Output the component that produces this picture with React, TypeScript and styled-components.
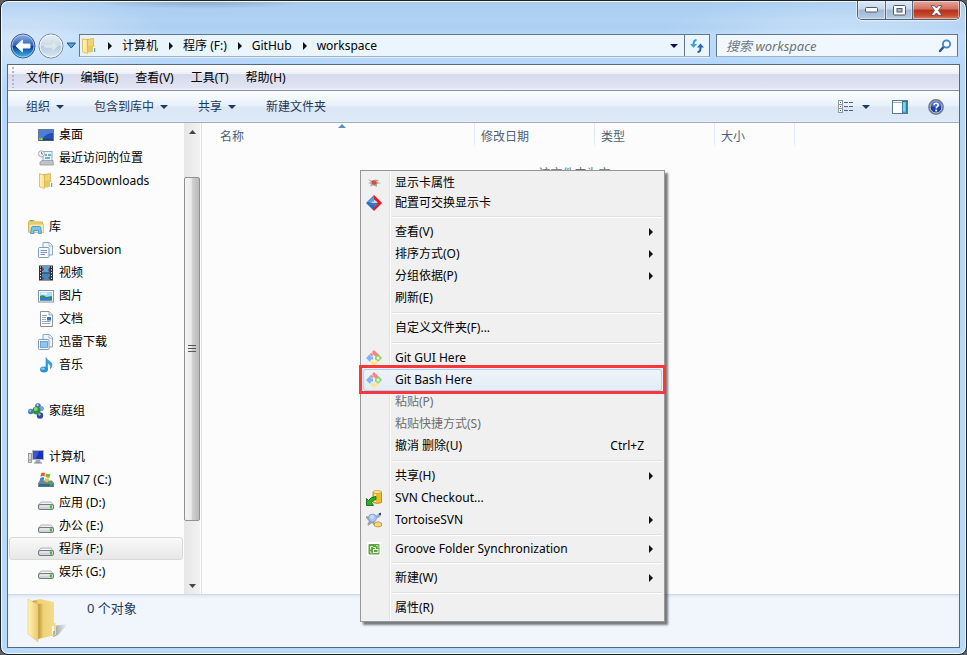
import React from "react";
import styled, { createGlobalStyle, css } from "styled-components";

const GlobalStyle = createGlobalStyle`
  * { box-sizing: border-box; }
  html, body { margin: 0; background: #5d6063; }
  body, button, input {
    font-family: "Noto Sans", "Noto Sans CJK SC", sans-serif;
    font-size: 12px;
    line-height: 16px;
    color: #000;
  }
  button { background: none; border: 0; padding: 0; margin: 0; text-align: left; white-space: nowrap; }
  svg { display: block; flex: none; }
  ul { list-style: none; margin: 0; padding: 0; }
`;

const Window = styled.div`
  position: relative;
  display: flex;
  flex-direction: column;
  height: 100vh;
  overflow: hidden;
  padding: 0 6px 6px;
  border: 1px solid #1d2229;
  border-radius: 8px;
  box-shadow: inset 0 0 0 1px #f2f8fe;
  background:
    radial-gradient(ellipse 150px 50px at 20px 40px, rgba(226, 238, 250, 0.75), transparent),
    radial-gradient(ellipse 110px 8px at 200px 0, rgba(110, 135, 165, 0.55), transparent),
    radial-gradient(ellipse 190px 40px at 850px 34px, rgba(226, 240, 254, 0.55), transparent),
    linear-gradient(#a9cdf1 0, #b0d2f3 20px, #accef0 26px, #b4d7fb 34px, #b6d9fc 100%);
`;

const TitleBar = styled.header`
  display: flex;
  justify-content: flex-end;
  height: 33px;
  flex: none;
`;

const Captions = styled.div`
  display: flex;
  height: 19px;
  border: 1px solid #4c5a6b;
  border-top: 0;
  border-radius: 0 0 5px 5px;
  box-shadow: 0 0 0 1px rgba(255, 255, 255, 0.6);
  overflow: hidden;
`;

const CaptionButton = styled.button<{ $close?: boolean }>`
  display: flex;
  align-items: center;
  justify-content: center;
  width: ${(p) => (p.$close ? 47 : 27)}px;
  box-shadow: inset 0 0 0 1px rgba(255, 255, 255, 0.45);
  background: ${(p) =>
    p.$close
      ? "linear-gradient(#e5a79b 0, #d3705f 45%, #b5301a 50%, #c64a2e 80%, #dd8265)"
      : "linear-gradient(#dde9f6 0, #c4d7eb 45%, #9fb9d4 50%, #b4cde6)"};
  & + & { border-left: 1px solid #5b6b7d; }
`;

const NavRow = styled.nav`
  display: flex;
  align-items: center;
  height: 23px;
  flex: none;
  margin: 0 2px 7px 3px;
`;

const NavButtons = styled.div`
  display: flex;
  align-items: center;
  gap: 2px;
  width: 69px;
  flex: none;
`;

const AddressBar = styled.div`
  display: flex;
  align-items: center;
  flex: 1;
  height: 23px;
  min-width: 0;
  padding-left: 1px;
  border: 1px solid #60778c;
  border-bottom-color: #9db2c6;
  box-shadow: 0 1px 0 rgba(255, 255, 255, 0.6);
  background: linear-gradient(90deg, #e8f2fb, #eaf5fe 20%);
`;

const Crumb = styled.button`
  display: flex;
  align-items: center;
  gap: 10px;
  margin-left: 11px;
`;

const AddressEnd = styled.div`
  display: flex;
  align-items: center;
  margin-left: auto;
  height: 100%;
`;

const AddressAction = styled.button<{ $divided?: boolean }>`
  display: flex;
  align-items: center;
  justify-content: center;
  width: ${(p) => (p.$divided ? 25 : 20)}px;
  height: 100%;
  ${(p) => p.$divided && css`border-left: 1px solid #60778c;`}
`;

const SearchBox = styled.label`
  display: flex;
  align-items: center;
  flex: 0 1 242px;
  height: 23px;
  margin-left: 6px;
  padding: 0 5px 0 9px;
  border: 1px solid #60778c;
  border-bottom-color: #9db2c6;
  background: #f0f7fe;
`;

const SearchInput = styled.input`
  flex: 1;
  min-width: 0;
  border: 0;
  padding: 0;
  outline: 0;
  background: transparent;
  font-size: 13px;
  font-style: italic;
  &::placeholder { color: #6d747b; opacity: 1; }
`;

const Client = styled.div`
  display: flex;
  flex-direction: column;
  flex: 1;
  min-height: 0;
  border: 1px solid #56697c;
  background: #fcfcfc;
`;

const MenuBar = styled.div`
  display: flex;
  align-items: center;
  gap: 17px;
  height: 26px;
  flex: none;
  padding-left: 4px;
  border-bottom: 1px solid #8a90a3;
  background: linear-gradient(#fff 0, #eceff8 9px, #d5daec 9px, #e2e4f4 23px, #f3f5fb);
`;

const Grip = styled.span`
  width: 2px;
  height: 21px;
  margin-right: -5px;
  background: repeating-linear-gradient(#b3b8c9 0 2px, transparent 2px 4px);
`;

const ToolBar = styled.div`
  display: flex;
  align-items: center;
  gap: 30px;
  height: 32px;
  flex: none;
  padding: 0 15px 0 18px;
  border-bottom: 1px solid #a0afc3;
  background: linear-gradient(#fcfefe 0, #e6f0fa 15px, #dce6f4 16px, #dde9f7 30px, #e8f1fa);
`;

const ToolButton = styled.button`
  display: flex;
  align-items: center;
  gap: 6px;
  color: #1e395b;
`;

const ToolEnd = styled.div`
  display: flex;
  align-items: center;
  gap: 20px;
  margin-left: auto;
`;

const ViewGroup = styled.div`
  display: flex;
  align-items: center;
  gap: 9px;
  margin-right: 2px;
`;

const Body = styled.div`
  display: flex;
  flex: 1;
  min-height: 0;
`;

const SideBar = styled.aside`
  width: 176px;
  flex: none;
  overflow: hidden;
`;

const TreeItem = styled.button<{ $top?: boolean; $selected?: boolean }>`
  display: flex;
  align-items: center;
  gap: 5px;
  width: calc(100% - 2px);
  height: 23px;
  margin-left: 1px;
  padding-left: ${(p) => (p.$top ? 18 : 28)}px;
  border: 1px solid transparent;
  border-radius: 3px;
  ${(p) =>
    p.$selected &&
    css`
      border-color: #d9d9d9;
      background: linear-gradient(#f9f9f9, #e7e7e7);
    `}
`;

const TreeGroup = styled.ul`
  & + & { margin-top: 23px; }
`;

const ScrollBar = styled.div`
  display: flex;
  flex-direction: column;
  width: 16px;
  flex: none;
  background: linear-gradient(90deg, #e6e6e6, #f2f2f2);
`;

const ScrollArrow = styled.button`
  display: flex;
  align-items: center;
  justify-content: center;
  height: 17px;
  flex: none;
`;

const ScrollSpace = styled.div<{ $grow: number }>`
  flex: ${(p) => p.$grow} 0 0;
`;

const ScrollThumb = styled.div`
  display: flex;
  flex: 344 0 0;
  align-items: center;
  justify-content: center;
  border: 1px solid #919191;
  border-radius: 2px;
  background: linear-gradient(90deg, #f4f4f4, #ebebeb 45%, #d2d2d2 50%, #b9b9bb);
`;

const Divider = styled.div`
  width: 2px;
  flex: none;
  border-right: 1px solid #d9e4f1;
`;

const Files = styled.main`
  flex: 1;
  min-width: 0;
`;

const Columns = styled.div`
  display: flex;
  height: 24px;
`;

const Column = styled.button<{ $width: number; $first?: boolean }>`
  position: relative;
  width: ${(p) => p.$width}px;
  padding: 4px 0 0 ${(p) => (p.$first ? 18 : 6)}px;
  color: #4c607a;
  border-right: 1px solid;
  border-image: linear-gradient(#dfe9f5, #dfe9f5 80%, transparent) 1;
`;

const SortMark = styled.span`
  position: absolute;
  top: 1px;
  left: 50%;
`;

const EmptyNote = styled.p`
  margin: 19px 0 0;
  text-align: center;
  color: #6d6d6d;
`;

const StatusBar = styled.footer`
  display: flex;
  gap: 19px;
  height: 53px;
  flex: none;
  padding: 2px 0 0 18px;
  border-top: 1px solid #ccd9ea;
  box-shadow: inset 0 2px 2px #dfe8f5;
  background: #f1f5fc;
`;

const StatusText = styled.span`
  padding-top: 3px;
  font-size: 13px;
  color: #1e395b;
`;

const ContextMenu = styled.div`
  position: absolute;
  left: 359px;
  top: 169px;
  width: 305px;
  padding: 2px;
  border: 1px solid #979797;
  box-shadow: 3px 3px 2px rgba(0, 0, 0, 0.5);
  background: linear-gradient(90deg, transparent 28px, #e2e3e3 28px 29px, #fff 29px 30px, transparent 30px), #f0f0f0;
`;

const MenuItem = styled.button<{ $height?: number; $hot?: boolean }>`
  position: relative;
  display: flex;
  align-items: center;
  width: 100%;
  height: ${(p) => p.$height ?? 22}px;
  padding: 0 9px 0 2px;
  ${(p) =>
    p.$hot &&
    css`
      border-radius: 3px;
      box-shadow: inset 0 0 0 1px #aecff7;
      background: linear-gradient(rgba(240, 244, 250, 0.9), rgba(224, 235, 248, 0.9));
      &::after {
        content: "";
        position: absolute;
        inset: -4px -4px -3px;
        border: 3px solid #fb3737;
      }
    `}
  &:disabled { color: #6d6d6d; }
`;

const ItemIcon = styled.span`
  display: flex;
  justify-content: center;
  width: 18px;
  margin-right: 12px;
`;

const Shortcut = styled.span`
  margin-left: auto;
  padding-right: 9px;
`;

const Submenu = styled.span`
  margin-left: auto;
`;

const Separator = styled.hr`
  height: 2px;
  margin: 3px 0 3px 29px;
  border: 0;
  border-top: 1px solid #e0e0e0;
  background: #fff;
`;

const RightArrow = () => (
  <svg width="4" height="8" viewBox="0 0 4 8"><path d="M0 0L4 4L0 8Z" fill="#111" /></svg>
);

const Caret = ({ color = "#1e395b" }: { color?: string }) => (
  <svg width="8" height="4" viewBox="0 0 8 4"><path d="M0 0H8L4 4Z" fill={color} /></svg>
);

const Folder = () => (
  <svg width="16" height="16" viewBox="0 0 16 16">
    <path d="M5 1H10.500V14H5Z" fill="#d6ae45" />
    <path d="M6.500 1.500L12.500 .5V13H6.500Z" fill="#f0d476" stroke="#d3ae4c" strokeWidth=".7" />
    <path d="M1.500 .8L6.500 2V15.500L1.500 13.800Z" fill="#fbe797" stroke="#d9b654" strokeWidth=".8" />
    <path d="M3 2V13.500" stroke="#fff6c8" />
    <path d="M11.500 7.500H13.500V14H10V14.500H7V8Z" fill="#e9c85f" />
    <path d="M12 9H13.800V14H12Z" fill="#fff" />
    <path d="M13 10H14.200V14H13Z" fill="#4ea4e6" />
  </svg>
);

const BigFolder = () => (
  <svg width="42" height="46" viewBox="0 0 42 46">
    <defs>
      <linearGradient id="bf1" x2="1"><stop stopColor="#fff3b8" /><stop offset="1" stopColor="#edcb68" /></linearGradient>
      <linearGradient id="bf2" x2="1"><stop stopColor="#b8953c" /><stop offset=".3" stopColor="#efd176" /><stop offset="1" stopColor="#f6df8e" /></linearGradient>
      <linearGradient id="bf3" x2="1"><stop stopColor="#555" stopOpacity=".6" /><stop offset="1" stopColor="#777" stopOpacity="0" /></linearGradient>
    </defs>
    <path d="M27 29L42 27L32 38L27 40Z" fill="url(#bf3)" />
    <path d="M6 4L14 2L28 5V29L12 38Z" fill="url(#bf2)" />
    <path d="M12 7L28 5V27L30 28V38L12 42Z" fill="url(#bf2)" />
    <path d="M2 2L12 8V45L2 37Z" fill="url(#bf1)" stroke="#e6cd79" strokeWidth=".6" />
    <path d="M26 26H29.500V37L25 38V29Z" fill="#f3da85" />
    <path d="M27 29V37" stroke="#fff" strokeWidth="1.500" />
    <path d="M28 34V37.500" stroke="#4e9bdc" strokeWidth="1.200" />
  </svg>
);

const BackIcon = () => (
  <svg width="26" height="26" viewBox="0 0 26 26">
    <defs>
      <linearGradient id="bk" x2="0" y2="1"><stop stopColor="#93b6e6" /><stop offset=".48" stopColor="#2c62b8" /><stop offset=".52" stopColor="#0c3c98" /><stop offset="1" stopColor="#3ec2f5" /></linearGradient>
    </defs>
    <circle cx="13" cy="13" r="12" fill="url(#bk)" stroke="#455c7b" />
    <circle cx="13" cy="13" r="11" fill="none" stroke="#bcd9f4" strokeOpacity=".7" />
    <path d="M6 13L12.500 7V11H20V15H12.500V19Z" fill="#fff" stroke="#e8f1fb" strokeWidth="1" strokeLinejoin="round" />
  </svg>
);

const ForwardIcon = () => (
  <svg width="26" height="26" viewBox="0 0 26 26">
    <defs>
      <linearGradient id="fw" x2="0" y2="1"><stop stopColor="#e4edf5" /><stop offset=".48" stopColor="#cddce9" /><stop offset=".52" stopColor="#b6cadc" /><stop offset="1" stopColor="#dceaf6" /></linearGradient>
    </defs>
    <circle cx="13" cy="13" r="12" fill="url(#fw)" stroke="#74869b" />
    <circle cx="13" cy="13" r="11" fill="none" stroke="#f2f7fc" />
    <path d="M20 13L14 7V11H6V15H14V19Z" fill="#dbe6f0" stroke="#c8d6e4" strokeWidth=".8" />
  </svg>
);

const RefreshIcon = () => (
  <svg width="16" height="16" viewBox="0 0 16 16" fill="none">
    <path d="M7.500 2C5 2 4.500 4 4.500 7" stroke="#3296d2" strokeWidth="2" />
    <path d="M1 6H8L4.500 10Z" fill="#3aa4dc" />
    <path d="M8.500 14C11.500 14 11.500 12 11.500 9" stroke="#245ca8" strokeWidth="2" />
    <path d="M8 9.500H15L11.500 5.500Z" fill="#2d67b4" />
  </svg>
);

const SearchIcon = () => (
  <svg width="14" height="14" viewBox="0 0 14 14" fill="none">
    <path d="M2 12L5.500 8" stroke="#2753a0" strokeWidth="2.400" strokeLinecap="round" />
    <circle cx="8.500" cy="5" r="3.600" fill="#f4faff" stroke="#3e84c8" strokeWidth="1.800" />
  </svg>
);

const ViewIcon = () => (
  <svg width="16" height="14" viewBox="0 0 16 14">
    {[0, 4, 8].map((y) => (
      <g key={y}>
        <rect x="1.500" y={y + 0.5} width="4" height="4" fill="#fff" stroke="#8f99a6" />
        <rect x="3" y={y + 2} width="1" height="1" fill={y === 4 ? "#c33" : "#3a5a80"} />
        <path d={`M7 ${y + 2.5}h4M12 ${y + 2.5}h4`} stroke="#4c637f" />
      </g>
    ))}
  </svg>
);

const PaneIcon = () => (
  <svg width="16" height="14" viewBox="0 0 16 14">
    <rect x=".5" y=".5" width="15" height="13" fill="#fff" stroke="#5b7893" />
    <path d="M1 2.500H15" stroke="#a3b6c8" />
    <rect x="10.500" y="1.500" width="4" height="11.500" fill="#63bdd9" stroke="#327e9f" />
    <path d="M12 3V11" stroke="#b5ebf5" />
  </svg>
);

const HelpIcon = () => (
  <svg width="16" height="16" viewBox="0 0 16 16">
    <circle cx="8" cy="8" r="7.200" fill="#1d40a9" stroke="#77797e" strokeWidth="1.400" />
    <circle cx="8" cy="8" r="6" fill="none" stroke="#c9d3e6" />
    <path d="M2.500 7A5.500 5.500 0 0 1 13.500 7Q8 9 2.500 7Z" fill="#6187d6" opacity=".7" />
    <path d="M6 6.300C6 3.600 10.200 3.700 10.200 6.200C10.200 7.700 8.200 7.600 8.200 9.500" stroke="#fff" strokeWidth="1.600" fill="none" />
    <rect x="7.300" y="10.600" width="1.800" height="1.800" fill="#fff" />
  </svg>
);

const Desktop = () => (
  <svg width="16" height="16" viewBox="0 0 16 16">
    <rect x=".5" y="2.500" width="15" height="11" fill="#234fae" stroke="#697b92" />
    <path d="M1 3H15V6Q9 6 5 11H1Z" fill="#4a7fd8" />
    <rect x="1" y="12" width="14" height="1.500" fill="#263d62" />
    <rect x="1" y="11" width="2" height="2" fill="#64c45c" /><rect x="3" y="11" width="1.500" height="2" fill="#f1c744" />
  </svg>
);

const Recent = () => (
  <svg width="16" height="16" viewBox="0 0 16 16">
    <rect x="5" y="1.500" width="9" height="10" fill="#eef3f8" stroke="#9aa7b4" />
    <path d="M7 4h2v2H7zM10 4h3v2h-3zM7 7h5v2H7z" fill="#6cacd8" />
    <path d="M2 12L4 10.500H15L15.500 15H2Z" fill="#c0c4c9" stroke="#8a9097" strokeWidth=".7" />
    <circle cx="3.500" cy="3.800" r="3" fill="#f6f7f8" stroke="#9ea5ac" />
    <path d="M3.500 2V4H5" stroke="#50606e" fill="none" strokeWidth=".8" />
  </svg>
);

const Library = () => (
  <svg width="16" height="16" viewBox="0 0 16 16">
    <path d="M.5 2.500L2 1.500H6L7 3H14.500V13H.5Z" fill="#edd378" stroke="#cbaa46" strokeWidth=".8" />
    <path d="M1 5H15.500V13.500H1Z" fill="#f8e7a2" stroke="#d9bb5b" strokeWidth=".7" />
    <path d="M2 1.800H5" stroke="#4fab3d" />
    <path d="M2.500 14.500L3.500 8.500Q3.700 7.500 5 7.500H11.500Q12.500 7.500 12.700 8.500L13.500 14.500H10.500V11.500H6V14.500Z" fill="#75c5ed" stroke="#3f91c5" strokeWidth=".8" />
  </svg>
);

const DocStack = ({ solid }: { solid?: boolean }) => (
  <svg width="16" height="16" viewBox="0 0 16 16">
    <path d="M5 .5H11.500L14.500 3.500V13H5Z" fill="#eef4fa" stroke="#92a8be" />
    <path d="M11 1V4H14.500" fill="#fff" stroke="#92a8be" strokeWidth=".8" />
    <rect x=".5" y="5.500" width="10.500" height="10" rx="1" fill="#f8fbfe" stroke="#7f9ab7" />
    {solid ? (
      <rect x="2.500" y="7.500" width="7" height="6" fill="#8fc5ef" stroke="#5797c9" strokeWidth=".8" />
    ) : (
      <path d="M2.500 8.500H9M2.500 10.500H9M2.500 12.500H7" stroke="#7890bb" strokeWidth="1.100" />
    )}
  </svg>
);

const Video = () => (
  <svg width="16" height="16" viewBox="0 0 16 16">
    <rect x="1" y=".5" width="14" height="15" fill="#2c3036" />
    <path d="M2.500 1.500V15M13.500 1.500V15" stroke="#f1f1f1" strokeWidth="1" strokeDasharray="1.200 1.600" />
    <rect x="4" y="1" width="8" height="6.500" fill="#5ba3d6" /><rect x="4" y="8.500" width="8" height="6.500" fill="#3d86c4" />
    <path d="M4 2L6 4L5 6H4M12 2L10 4.500L11 7H12M4 12L6 13L5 15H4M12 11L10 13L12 15Z" fill="#8c3d34" />
  </svg>
);

const Picture = () => (
  <svg width="16" height="16" viewBox="0 0 16 16">
    <rect x=".5" y="2.500" width="15" height="11.500" fill="#fff" stroke="#8094aa" />
    <rect x="2" y="4" width="12" height="8.500" fill="#a9dcf5" />
    <path d="M2 8Q6 6 8 9L14 8V12.500H2Z" fill="#36876e" /><path d="M2 10H14V12.500H2Z" fill="#2e7fc0" />
    <path d="M3 5.500H9" stroke="#fff" strokeWidth="1.500" />
  </svg>
);

const Doc = () => (
  <svg width="16" height="16" viewBox="0 0 16 16">
    <path d="M2.500 .5H11L14.500 4V15.500H2.500Z" fill="#fff" stroke="#8a9299" />
    <path d="M11 .5V4H14.500" fill="#e6ebf0" stroke="#8a9299" strokeWidth=".8" />
    <path d="M4 4.500H9M4 6.500H8M4 8.500H8M4 10.500H12.500M4 12.500H12.500" stroke="#97aac4" />
    <rect x="9" y="6" width="4" height="3.500" fill="#3575b4" />
  </svg>
);

const Music = () => (
  <svg width="16" height="16" viewBox="0 0 16 16">
    <path d="M8 .5C9 4 13.500 4 14 7.500Q14.200 10 12.500 11.500Q13 7 9.500 6V12.500H8Z" fill="#3ba2e2" stroke="#2a82c4" strokeWidth=".6" />
    <ellipse cx="6" cy="12.500" rx="4" ry="3" fill="#2c92d8" />
    <ellipse cx="5" cy="11.700" rx="2" ry="1.200" fill="#7acaf4" />
  </svg>
);

const HomeGroup = () => (
  <svg width="16" height="16" viewBox="0 0 16 16">
    <circle cx="10" cy="3" r="2.800" fill="#3f62bf" /><circle cx="13.300" cy="5.500" r="2.600" fill="#7a9fe0" />
    <circle cx="2.800" cy="8.500" r="2.700" fill="#3f79bd" /><circle cx="12" cy="12.500" r="3.200" fill="#2c49a8" />
    <circle cx="8.500" cy="7.500" r="4" fill="#2f9436" /><circle cx="7.800" cy="6" r="1.900" fill="#8cd680" />
    <circle cx="9.600" cy="2.200" r="1.100" fill="#c4d8f6" /><circle cx="11.500" cy="11.500" r="1.200" fill="#8cb0ea" />
    <circle cx="2.300" cy="7.700" r="1" fill="#a9d2ee" />
  </svg>
);

const Computer = () => (
  <svg width="16" height="16" viewBox="0 0 16 16">
    <rect x=".5" y="4.500" width="3" height="9" fill="#dadde0" stroke="#85898e" strokeWidth=".8" />
    <path d="M1 11H3" stroke="#5bb53b" />
    <rect x="4.500" y="1.500" width="11" height="9" fill="#1a2fbd" stroke="#b2b7bd" />
    <path d="M5 2H11L8 10H5Z" fill="#3d53d4" />
    <path d="M8 11H12L13 14H7Z" fill="#a2a7ae" /><path d="M6 14H14" stroke="#7f858d" />
  </svg>
);

const Drive = ({ system }: { system?: boolean }) => (
  <svg width="16" height="16" viewBox="0 0 16 16">
    {system ? (
      <g>
        <path d="M0 11L2 8.500H14L16 11V15H0Z" fill="#69879a" /><path d="M1 12H15V14.500H1Z" fill="#336d85" />
        <path d="M3 1.500Q5 0 7 1L6.500 4.500Q4.500 3.500 2.500 5Z" fill="#e8592c" />
        <path d="M8 1.500Q10 2.500 12.500 1.500L11.500 5.500Q9.500 6 7.500 4.700Z" fill="#7cb83a" />
        <path d="M2.300 6Q4.300 4.800 6.300 5.500L5.500 9Q3.500 8.300 1.500 9.300Z" fill="#3d83d0" />
        <path d="M7.300 6Q9.300 7 11.200 6.300L10.200 10Q8.500 10.500 6.500 9.300Z" fill="#f6c22c" />
      </g>
    ) : (
      <g>
        <path d="M.5 10L3 7H13L15.500 10Z" fill="#f1f2f3" stroke="#9fa2a6" strokeWidth=".8" />
        <rect x=".5" y="9.500" width="15" height="5" rx="1.500" fill="#cfd2d6" stroke="#777b81" />
        <path d="M2 11H11" stroke="#f6f7f8" />
      </g>
    )}
    <rect x="12" y="10.500" width="2" height="3" fill="#41bd2d" />
  </svg>
);

const GitIcon = () => (
  <svg width="16" height="16" viewBox="0 0 16 16">
    <path d="M6 2L8 0L12.500 4.500L10 7L8 5L7 4ZM3.800 4.200L5.200 2.800L7.500 5L5.800 6.200Z" fill="#ff8080" />
    <path d="M0 8L4 4L5 6.500H7V9.500H5L4 12Z" fill="#80b3ff" />
    <path fillRule="evenodd" d="M12.500 4L16 8L12 12L11 10.500L9 9.500V6.500L11 5.500ZM11 7A1.500 1.500 0 1 0 13.500 8.500A1.500 1.500 0 0 0 11 7Z" fill="#8dd35f" />
    <path d="M4 12L6 10L7 12H9.500L10 10L12 12L8 16Z" fill="#ffe680" />
  </svg>
);

const DisplayIcon = () => (
  <svg width="14" height="12" viewBox="0 0 14 12">
    <path d="M1 2L5 4L8 2.500L12 3L10 5L14 6L10 7L10 10L6.500 8.500L3 9.500L4 7L1 6L4 5Z" fill="#b5a8a5" />
    <path d="M4.500 3.500L8 3.500L10 6L8 8L5 7Z" fill="#c75443" /><path d="M6 4.500L8.500 5.500L7 7.500Z" fill="#ef4835" />
  </svg>
);

const SwitchIcon = () => (
  <svg width="16" height="16" viewBox="0 0 16 16">
    <path d="M8 0V16L0 8Z" fill="#2a6cc0" /><path d="M8 0L16 8L8 16Z" fill="#f2141d" />
    <path d="M8 1V7L1 7.500Z" fill="#5f9bdd" />
    <path d="M4 7L8 6.500V4.500L12 7.500L8 8.500Z" fill="#c5dcf4" />
    <path d="M12 8.500L8 8L3 9V10L8 10V12.500L12 9.500Z" fill="#3b7dcb" />
  </svg>
);

const CheckoutIcon = () => (
  <svg width="16" height="16" viewBox="0 0 16 16">
    <path d="M7 2V12.500Q11 14.500 15.500 12.500V2Z" fill="#f0ba2b" stroke="#bb7f0c" strokeWidth=".8" />
    <ellipse cx="11.200" cy="2" rx="4.200" ry="1.600" fill="#fbe493" stroke="#c58c14" strokeWidth=".6" />
    <path d="M9 4V12" stroke="#fff0a6" strokeWidth="1.500" />
    <path d="M.5 8.500L2.500 10.500Q5 6.500 10 6.500V9.500Q7 9.500 5.500 12.500L7.500 15.500H.5Z" fill="#2fb020" stroke="#126b12" strokeWidth=".9" />
  </svg>
);

const TortoiseIcon = () => (
  <svg width="16" height="16" viewBox="0 0 16 16">
    <path d="M0 4L4 5L9 11L8 13.500L6 11L2 14L1.500 12L3 9L0 6Z" fill="#9aa0a6" />
    <path d="M9.500 4L12 2L15 0V4L11.500 6.500Z" fill="#9db0c2" /><rect x="13" y="1" width="2" height="2" fill="#284f80" />
    <circle cx="6.500" cy="6" r="4" fill="#a6c5f5" stroke="#8098c8" strokeWidth=".8" />
    <circle cx="6" cy="5" r="2" fill="#c4dcff" />
    <path d="M8.500 11Q12 8.500 15.500 11V14Q12 16 8.500 14Z" fill="#f6d777" stroke="#b98e34" strokeWidth=".8" />
  </svg>
);

const GrooveIcon = () => (
  <svg width="14" height="14" viewBox="0 0 14 14">
    <rect width="14" height="14" fill="#fff" />
    <rect x="1.500" y="2" width="11" height="10.500" rx="1" fill="#5fa53e" />
    <path d="M3.500 7.500V4.500H5.500L6.500 5.500H8.500V7" fill="none" stroke="#e9f6e0" />
    <rect x="6.500" y="7.500" width="4.500" height="3" fill="#5fa53e" stroke="#f3faec" />
    <path d="M9 3.500H11V6M3.500 9V11H5.500" fill="none" stroke="#d9efca" strokeWidth=".8" />
  </svg>
);

const TREE = [
  [
    { label: "桌面", icon: <Desktop /> },
    { label: "最近访问的位置", icon: <Recent /> },
    { label: "2345Downloads", icon: <Folder /> },
  ],
  [
    { label: "库", icon: <Library />, top: true },
    { label: "Subversion", icon: <DocStack /> },
    { label: "视频", icon: <Video /> },
    { label: "图片", icon: <Picture /> },
    { label: "文档", icon: <Doc /> },
    { label: "迅雷下载", icon: <DocStack solid /> },
    { label: "音乐", icon: <Music /> },
  ],
  [{ label: "家庭组", icon: <HomeGroup />, top: true }],
  [
    { label: "计算机", icon: <Computer />, top: true },
    { label: "WIN7 (C:)", icon: <Drive system /> },
    { label: "应用 (D:)", icon: <Drive /> },
    { label: "办公 (E:)", icon: <Drive /> },
    { label: "程序 (F:)", icon: <Drive />, selected: true },
    { label: "娱乐 (G:)", icon: <Drive /> },
  ],
] as { label: string; icon: React.ReactNode; top?: boolean; selected?: boolean }[][];

type Entry = {
  label: string;
  icon?: React.ReactNode;
  sub?: boolean;
  keys?: string;
  disabled?: boolean;
  hot?: boolean;
  height?: number;
};

const MENU: (Entry | null)[] = [
  { label: "显示卡属性", icon: <DisplayIcon />, height: 20 },
  { label: "配置可交换显示卡", icon: <SwitchIcon />, height: 20 },
  null,
  { label: "查看(V)", sub: true },
  { label: "排序方式(O)", sub: true },
  { label: "分组依据(P)", sub: true },
  { label: "刷新(E)" },
  null,
  { label: "自定义文件夹(F)..." },
  null,
  { label: "Git GUI Here", icon: <GitIcon /> },
  { label: "Git Bash Here", icon: <GitIcon />, hot: true },
  { label: "粘贴(P)", disabled: true },
  { label: "粘贴快捷方式(S)", disabled: true },
  { label: "撤消 删除(U)", keys: "Ctrl+Z" },
  null,
  { label: "共享(H)", sub: true },
  { label: "SVN Checkout...", icon: <CheckoutIcon /> },
  { label: "TortoiseSVN", icon: <TortoiseIcon />, sub: true },
  null,
  { label: "Groove Folder Synchronization", icon: <GrooveIcon />, sub: true, height: 20 },
  null,
  { label: "新建(W)", sub: true },
  null,
  { label: "属性(R)" },
];

export default function App() {
  return (
    <>
      <GlobalStyle />
      <Window>
        <TitleBar>
          <Captions>
            <CaptionButton aria-label="最小化">
              <svg width="13" height="6" viewBox="0 0 13 6"><rect x=".5" y=".5" width="12" height="4.500" rx="1" fill="#fff" stroke="#535a66" /></svg>
            </CaptionButton>
            <CaptionButton aria-label="最大化">
              <svg width="13" height="11" viewBox="0 0 13 11">
                <rect x=".5" y=".5" width="12" height="9.500" rx="1" fill="#fff" stroke="#535a66" />
                <rect x="4" y="3.500" width="5" height="3.500" fill="#a6bbd2" stroke="#535a66" />
              </svg>
            </CaptionButton>
            <CaptionButton $close aria-label="关闭">
              <svg width="13" height="11" viewBox="0 0 13 11">
                <path d="M1 .7H4.500L6.500 3L8.500 .7H12L8.500 5.500L12 10.300H8.500L6.500 8L4.500 10.300H1L4.500 5.500Z" fill="#fff" stroke="#5a4a56" strokeWidth=".9" />
              </svg>
            </CaptionButton>
          </Captions>
        </TitleBar>

        <NavRow>
          <NavButtons>
            <button aria-label="后退"><BackIcon /></button>
            <button aria-label="前进"><ForwardIcon /></button>
            <button aria-label="最近的页面">
              <svg width="11" height="8" viewBox="0 0 11 8"><path d="M1 1H9.500L5.250 6Z" fill="#4aa4e8" stroke="#244f84" strokeLinejoin="round" /></svg>
            </button>
          </NavButtons>
          <AddressBar>
            <Folder />
            {["计算机", "程序 (F:)", "GitHub", "workspace"].map((name) => (
              <Crumb key={name}><RightArrow />{name}</Crumb>
            ))}
            <AddressEnd>
              <AddressAction aria-label="历史地址"><Caret color="#0a0a60" /></AddressAction>
              <AddressAction $divided aria-label="刷新"><RefreshIcon /></AddressAction>
            </AddressEnd>
          </AddressBar>
          <SearchBox>
            <SearchInput aria-label="搜索" placeholder="搜索 workspace" />
            <SearchIcon />
          </SearchBox>
        </NavRow>

        <Client>
          <MenuBar>
            <Grip />
            {["文件(F)", "编辑(E)", "查看(V)", "工具(T)", "帮助(H)"].map((name) => (
              <button key={name}>{name}</button>
            ))}
          </MenuBar>
          <ToolBar>
            <ToolButton>组织<Caret /></ToolButton>
            <ToolButton>包含到库中<Caret /></ToolButton>
            <ToolButton>共享<Caret /></ToolButton>
            <ToolButton>新建文件夹</ToolButton>
            <ToolEnd>
              <ViewGroup>
                <button aria-label="更改视图"><ViewIcon /></button>
                <button aria-label="更多视图选项"><Caret /></button>
              </ViewGroup>
              <button aria-label="预览窗格"><PaneIcon /></button>
              <button aria-label="帮助"><HelpIcon /></button>
            </ToolEnd>
          </ToolBar>

          <Body>
            <SideBar>
              {TREE.map((group) => (
                <TreeGroup key={group[0].label}>
                  {group.map((item) => (
                    <li key={item.label}>
                      <TreeItem $top={item.top} $selected={item.selected}>
                        {item.icon}
                        {item.label}
                      </TreeItem>
                    </li>
                  ))}
                </TreeGroup>
              ))}
            </SideBar>
            <ScrollBar>
              <ScrollArrow aria-label="向上滚动">
                <svg width="7" height="4" viewBox="0 0 7 4"><path d="M0 4L3.500 0L7 4Z" fill="#444" /></svg>
              </ScrollArrow>
              <ScrollSpace $grow={37} />
              <ScrollThumb>
                <svg width="8" height="8" viewBox="0 0 8 8"><path d="M0 .5H8M0 3.500H8M0 6.500H8" stroke="#555" /></svg>
              </ScrollThumb>
              <ScrollSpace $grow={56} />
              <ScrollArrow aria-label="向下滚动">
                <svg width="7" height="4" viewBox="0 0 7 4"><path d="M0 0H7L3.500 4Z" fill="#444" /></svg>
              </ScrollArrow>
            </ScrollBar>
            <Divider />
            <Files>
              <Columns>
                <Column $width={273} $first>
                  名称
                  <SortMark><svg width="8" height="4" viewBox="0 0 8 4"><path d="M0 4L4 0L8 4Z" fill="#5b92b5" /></svg></SortMark>
                </Column>
                <Column $width={120}>修改日期</Column>
                <Column $width={120}>类型</Column>
                <Column $width={80}>大小</Column>
              </Columns>
              <EmptyNote>该文件夹为空。</EmptyNote>
            </Files>
          </Body>

          <StatusBar>
            <BigFolder />
            <StatusText>0 个对象</StatusText>
          </StatusBar>
        </Client>

        <ContextMenu role="menu">
          {MENU.map((entry, i) =>
            entry === null ? (
              <Separator key={i} />
            ) : (
              <MenuItem key={entry.label} role="menuitem" $height={entry.height} $hot={entry.hot} disabled={entry.disabled}>
                <ItemIcon>{entry.icon}</ItemIcon>
                {entry.label}
                {entry.keys && <Shortcut>{entry.keys}</Shortcut>}
                {entry.sub && <Submenu><RightArrow /></Submenu>}
              </MenuItem>
            )
          )}
        </ContextMenu>
      </Window>
    </>
  );
}
